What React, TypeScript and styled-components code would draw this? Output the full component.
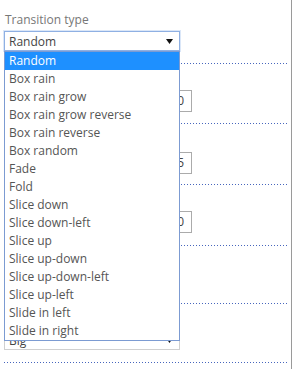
import styled, { createGlobalStyle } from 'styled-components';

const GlobalStyle = createGlobalStyle`
  html, body {
    margin: 0;
    background: #fff;
  }
  body {
    font-family: "Open Sans", "Noto Sans", sans-serif;
    font-size: 12px;
    color: #444;
  }
`;

const Panel = styled.div`
  position: relative;
  box-sizing: border-box;
  width: 292px;
  height: 369px;
  padding: 0 4px;
  border-right: 1px solid #9a9a9a;
`;

const Field = styled.div<{ $top?: number; $bottom?: number }>`
  display: flex;
  flex-direction: column;
  gap: 2px;
  padding-top: ${(p) => p.$top ?? 6}px;
  padding-bottom: ${(p) => p.$bottom ?? 11}px;
`;

const Label = styled.div`
  height: 18px;
  line-height: 18px;
  padding-left: 1px;
  color: #777;
`;

const Separator = styled.div`
  height: 1px;
  background: repeating-linear-gradient(
    to right,
    #4766bd 0 1px,
    transparent 1px 3px
  );
`;

const SelectBox = styled.div<{ $focused?: boolean }>`
  box-sizing: border-box;
  display: flex;
  align-items: center;
  justify-content: space-between;
  width: 176px;
  height: 20px;
  padding: 0 6px 0 4px;
  border: 1px solid ${(p) => (p.$focused ? '#8fb0e3' : '#d0d0d0')};
  box-shadow: ${(p) => (p.$focused ? '0 0 0 1px #dbe7f8' : 'none')};
  color: #444;
`;

const NumberBox = styled.div`
  box-sizing: border-box;
  width: 188px;
  height: 22px;
  line-height: 20px;
  padding-right: 7px;
  text-align: right;
  border: 1px solid #ababab;
  color: #444;
`;

const CheckRow = styled.label`
  display: flex;
  align-items: center;
  gap: 6px;
  height: 22px;
  color: #555;
`;

const CheckBox = styled.span`
  box-sizing: border-box;
  width: 13px;
  height: 13px;
  border: 1px solid #ababab;
`;

const DropList = styled.ul`
  position: absolute;
  left: 4px;
  top: 51px;
  box-sizing: border-box;
  width: 176px;
  margin: 0;
  padding: 0;
  list-style: none;
  background: #fff;
  border: 1px solid #7c9bd2;
`;

const Option = styled.li<{ $active?: boolean }>`
  height: 18px;
  line-height: 18px;
  padding-left: 4px;
  background: ${(p) => (p.$active ? '#1e90ff' : 'transparent')};
  color: ${(p) => (p.$active ? '#fff' : '#555')};
  white-space: nowrap;
`;

const Arrow = () => (
  <svg width="7" height="5" viewBox="0 0 7 5">
    <polygon points="0,0 7,0 3.5,5" fill="#111" />
  </svg>
);

const options = [
  'Random',
  'Box rain',
  'Box rain grow',
  'Box rain grow reverse',
  'Box rain reverse',
  'Box random',
  'Fade',
  'Fold',
  'Slice down',
  'Slice down-left',
  'Slice up',
  'Slice up-down',
  'Slice up-down-left',
  'Slice up-left',
  'Slide in left',
  'Slide in right',
];

export default function App() {
  return (
    <>
      <GlobalStyle />
      <Panel>
        <Field $top={11} $bottom={12}>
          <Label>Transition type</Label>
          <SelectBox $focused>
            Random
            <Arrow />
          </SelectBox>
        </Field>
        <Separator />
        <Field>
          <Label>Pause time</Label>
          <NumberBox>3000</NumberBox>
        </Field>
        <Separator />
        <Field $top={8} $bottom={10}>
          <Label>Slices</Label>
          <NumberBox>15</NumberBox>
        </Field>
        <Separator />
        <Field $bottom={12}>
          <Label>Animation speed</Label>
          <NumberBox>500</NumberBox>
        </Field>
        <Separator />
        <Field $bottom={9}>
          <Label>Navigation</Label>
          <CheckRow>
            <CheckBox />
            Pause on hover
          </CheckRow>
        </Field>
        <Separator />
        <Field $bottom={12}>
          <Label>Size</Label>
          <SelectBox>
            Big
            <Arrow />
          </SelectBox>
        </Field>
        <Separator />
        <DropList>
          {options.map((o, i) => (
            <Option key={o} $active={i === 0}>
              {o}
            </Option>
          ))}
        </DropList>
      </Panel>
    </>
  );
}
